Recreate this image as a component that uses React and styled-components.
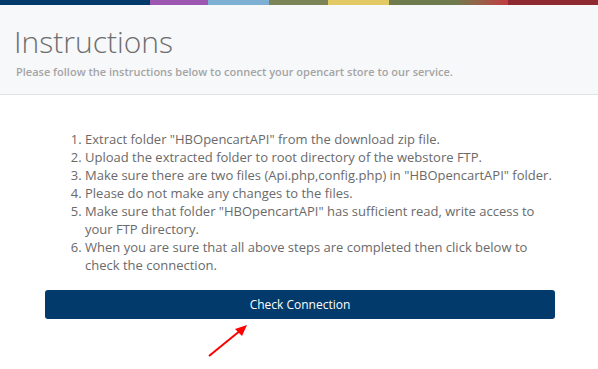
import React from "react";
import styled, { createGlobalStyle } from "styled-components";

const Global = createGlobalStyle`
  html, body { margin: 0; padding: 0; background: #ffffff; }
  body { font-family: "Open Sans", "Noto Sans", sans-serif; }
`;

const Page = styled.div`
  position: relative;
  width: 598px;
  height: 369px;
  overflow: hidden;
  background: #ffffff;
`;

const ColorBar = styled.div`
  display: flex;
  height: 5px;
`;

const Segment = styled.div`
  width: ${(p) => p.$w}px;
  background: ${(p) => p.$bg};
`;

const Header = styled.header`
  background: #f7f8fa;
  border-bottom: 1px solid #e2e3e5;
  padding: 20px 14px 0 14px;
  height: 69px;
`;

const Title = styled.h1`
  margin: 0;
  font-family: "Open Sans", sans-serif;
  font-weight: 300;
  font-size: 30px;
  line-height: 33px;
  color: #6e6e6e;
`;

const Subtitle = styled.p`
  margin: 6px 0 0 2px;
  font-family: "Open Sans", sans-serif;
  font-weight: 600;
  font-size: 11px;
  line-height: 16px;
  color: #a4a4a4;
`;

const Body = styled.main`
  padding: 35px 43px 0 45px;
`;

const Steps = styled.ol`
  margin: 0;
  padding: 0 0 0 40px;
  font-family: "Open Sans", sans-serif;
  font-size: 13px;
  line-height: 18px;
  color: #6a6a6a;
`;

const Button = styled.button`
  display: block;
  width: 510px;
  height: 29px;
  margin-top: 16px;
  border: none;
  border-radius: 3px;
  background: #013a6b;
  color: #ffffff;
  font-family: "Open Sans", sans-serif;
  font-size: 12px;
  line-height: 17px;
  cursor: pointer;
`;

const Arrow = styled.svg`
  position: absolute;
  left: 200px;
  top: 318px;
`;

const segments = [
  { w: 150, bg: "#013a6b" },
  { w: 58, bg: "#9c57b0" },
  { w: 61, bg: "#7eb0d3" },
  { w: 59, bg: "#7a8457" },
  { w: 61, bg: "#e2c964" },
  { w: 66, bg: "#6e7b4c" },
  { w: 53, bg: "linear-gradient(90deg, #6e7b4c 0%, #9a5f48 50%, #c23b40 100%)" },
  { w: 90, bg: "#8f2a30" },
];

const steps = [
  'Extract folder "HBOpencartAPI" from the download zip file.',
  "Upload the extracted folder to root directory of the webstore FTP.",
  'Make sure there are two files (Api.php,config.php) in "HBOpencartAPI" folder.',
  "Please do not make any changes to the files.",
  'Make sure that folder "HBOpencartAPI" has sufficient read, write access to your FTP directory.',
  "When you are sure that all above steps are completed then click below to check the connection.",
];

export default function App() {
  return (
    <Page>
      <Global />
      <ColorBar>
        {segments.map((s, i) => (
          <Segment key={i} $w={s.w} $bg={s.bg} />
        ))}
      </ColorBar>
      <Header>
        <Title>Instructions</Title>
        <Subtitle>
          Please follow the instructions below to connect your opencart store to our service.
        </Subtitle>
      </Header>
      <Body>
        <Steps>
          {steps.map((t, i) => (
            <li key={i}>{t}</li>
          ))}
        </Steps>
        <Button>Check Connection</Button>
      </Body>
      <Arrow width="60" height="45" viewBox="0 0 60 45">
        <line x1="9" y1="38" x2="41" y2="12" stroke="#ff0000" strokeWidth="2" />
        <polygon points="47,7 35,11 42,18" fill="#ff0000" />
      </Arrow>
    </Page>
  );
}
